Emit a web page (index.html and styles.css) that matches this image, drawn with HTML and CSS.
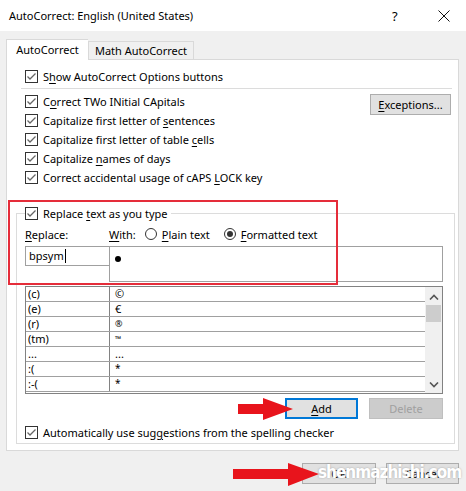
FILE: index.html
```html
<!DOCTYPE html>
<html>
<head>
<meta charset="utf-8">
<title>AutoCorrect</title>
<link rel="stylesheet" href="styles.css">
</head>
<body>

<div class="window">
	<div class="titlebar">
		<span class="title">AutoCorrect: English (United States)</span>
		<span class="help">?</span>
		<span class="close">
			<svg width="12" height="12" viewBox="0 0 12 12"><path d="M0.5 0.5 L11.5 11.5 M11.5 0.5 L0.5 11.5" stroke="#111" stroke-width="1"/></svg>
		</span>
	</div>

	<div class="body">
		<div class="tabs">
			<div class="tab active">AutoCorrect</div>
			<div class="tab">Math AutoCorrect</div>
		</div>

		<div class="panel">
			<div class="check first"><span class="box"></span><span>S<u>h</u>ow AutoCorrect Options buttons</span></div>
			<div class="sep"></div>

			<div class="options">
				<div class="checks">
					<div class="check"><span class="box"></span><span>C<u>o</u>rrect TWo INitial CApitals</span></div>
					<div class="check"><span class="box"></span><span>Capitalize first letter of <u>s</u>entences</span></div>
					<div class="check"><span class="box"></span><span>Capitalize first letter of table <u>c</u>ells</span></div>
					<div class="check"><span class="box"></span><span>Capitalize <u>n</u>ames of days</span></div>
					<div class="check"><span class="box"></span><span>Correct accidental usage of cAPS <u>L</u>OCK key</span></div>
				</div>
				<div class="btn exceptions"><u>E</u>xceptions...</div>
			</div>

			<fieldset class="group">
				<legend class="check"><span class="box"></span><span>Replace <u>t</u>ext as you type</span></legend>

				<div class="labels">
					<span class="lbl-replace"><u>R</u>eplace:</span>
					<span class="lbl-with"><u>W</u>ith:</span>
					<span class="radio"></span><span class="radio-text"><u>P</u>lain text</span>
					<span class="radio on"></span><span class="radio-text"><u>F</u>ormatted text</span>
				</div>

				<div class="inputs">
					<div class="replace-input">bpsym<span class="caret"></span></div>
					<div class="with-input"><span class="bullet"></span></div>
				</div>

				<div class="list">
					<table class="entries">
						<tr><td>(c)</td><td>©</td></tr>
						<tr><td>(e)</td><td>€</td></tr>
						<tr><td>(r)</td><td class="small">®</td></tr>
						<tr><td>(tm)</td><td class="tiny">™</td></tr>
						<tr><td>...</td><td>...</td></tr>
						<tr><td>:(</td><td class="star">*</td></tr>
						<tr><td>:-(</td><td class="star">*</td></tr>
					</table>
					<div class="scrollbar">
						<svg class="arrow-up" width="10" height="6" viewBox="0 0 10 6"><path d="M1 5.5 L5 1.5 L9 5.5" fill="none" stroke="#555" stroke-width="1.6"/></svg>
						<div class="thumb"></div>
						<svg class="arrow-down" width="10" height="6" viewBox="0 0 10 6"><path d="M1 0.5 L5 4.5 L9 0.5" fill="none" stroke="#555" stroke-width="1.6"/></svg>
					</div>
				</div>

				<div class="list-buttons">
					<div class="btn default"><u>A</u>dd</div>
					<div class="btn disabled">Delete</div>
				</div>

				<div class="check last"><span class="box"></span><span>Automatically use sug<u>g</u>estions from the spelling checker</span></div>
			</fieldset>
		</div>

		<div class="footer">
			<div class="btn">OK</div>
			<div class="btn">Cancel</div>
		</div>
	</div>

	<!-- red markup drawn over the dialog -->
	<div class="highlight"></div>
	<svg class="pointer pointer-add" width="56" height="24" viewBox="0 0 56 24"><polygon points="0,6 25,6 25,0 55,11 25,22 25,16 0,16" fill="#e8141c"/></svg>
	<svg class="pointer pointer-ok" width="88" height="24" viewBox="0 0 88 24"><polygon points="0,6 55,6 55,0 86,11 55,23 55,16 0,16" fill="#e8141c"/></svg>
	<div class="watermark">shenmazhishi.com</div>
</div>

</body>
</html>
```

FILE: styles.css
```css
body {
	margin: 0;
	padding: 0;
	background: #f0f0f0;
}
u {
	text-decoration-thickness: 1px;
	text-underline-offset: 2px;
}
.window {
	position: relative;
	width: 466px;
	height: 491px;
	overflow: hidden;
	background: #f0f0f0;
	font-family: "Noto Sans", "Open Sans", sans-serif;
	font-size: 11px;
	color: #000;
}

/* title bar */
.titlebar {
	height: 31px;
	background: #fff;
	display: flex;
	align-items: center;
	padding-left: 9px;
}
.title {
	flex: 1;
	font-size: 11px;
}
.help {
	width: 12px;
	margin-right: 34px;
	font-size: 13px;
}
.close {
	width: 12px;
	height: 12px;
	margin-right: 16px;
	display: flex;
}

.body {
	padding: 8px 7px 0 6px;
}

/* tabs */
.tabs {
	display: flex;
	height: 20px;
	align-items: flex-end;
}
.tab {
	height: 18px;
	border: 1px solid #d9d9d9;
	border-bottom: none;
	line-height: 17px;
	box-sizing: border-box;
	background: #f0f0f0;
	width: 106px;
	text-align: center;
	white-space: nowrap;
}
.tab.active {
	position: relative;
	z-index: 1;
	height: 21px;
	width: 82px;
	margin-bottom: -1px;
	background: #fff;
	border-right: none;
	line-height: 20px;
}

.panel {
	height: 392px;
	box-sizing: border-box;
	background: #fff;
	border: 1px solid #d9d9d9;
	padding-top: 7px;
}

/* checkboxes */
.check {
	display: flex;
	align-items: center;
	height: 19px;
	padding-left: 18px;
	white-space: nowrap;
}
.box {
	width: 13px;
	height: 13px;
	box-sizing: border-box;
	border: 1px solid #333;
	margin-right: 5px;
	flex: none;
	background: #fff url("data:image/svg+xml,%3Csvg xmlns='http://www.w3.org/2000/svg' width='11' height='11'%3E%3Cpath d='M1.5 5.5 L4 8 L9.5 2.5' fill='none' stroke='%23666' stroke-width='1.3'/%3E%3C/svg%3E") no-repeat center;
}
.sep {
	height: 1px;
	background: #dcdcdc;
	margin: 2px 6px 3px 14px;
}

.options {
	display: flex;
	align-items: flex-start;
}
.checks {
	flex: 1;
}
.btn {
	height: 21px;
	box-sizing: border-box;
	border: 1px solid #adadad;
	background: #e1e1e1;
	text-align: center;
	line-height: 19px;
}
.exceptions {
	width: 81px;
	margin: 2px 7px 0 0;
}

/* replace group */
.group {
	margin: 18px 3px 0 9px;
	padding: 0 11px 3px 8px;
	border: 1px solid #dcdcdc;
	min-inline-size: 0;
}
.group legend {
	height: 16px;
	padding: 0 3px 0 0;
	margin-left: 0;
}
.labels {
	display: flex;
	align-items: center;
	height: 16px;
	margin-top: 5px;
}
.lbl-replace {
	width: 84px;
}
.lbl-with {
	margin-right: 9px;
}
.radio {
	width: 12px;
	height: 12px;
	box-sizing: border-box;
	border: 1px solid #333;
	border-radius: 50%;
	margin-right: 5px;
	position: relative;
}
.radio.on::after {
	content: "";
	position: absolute;
	left: 2px;
	top: 2px;
	width: 6px;
	height: 6px;
	border-radius: 50%;
	background: #333;
}
.radio-text {
	margin-right: 14px;
}

.inputs {
	display: flex;
	align-items: flex-start;
	margin-top: 4px;
}
.replace-input {
	width: 84px;
	height: 20px;
	box-sizing: border-box;
	border: 1px solid #a0a0a0;
	border-right: none;
	padding-left: 3px;
	line-height: 18px;
	display: flex;
	align-items: center;
}
.caret {
	width: 1px;
	height: 14px;
	background: #000;
	margin-left: 1px;
}
.with-input {
	flex: 1;
	height: 36px;
	box-sizing: border-box;
	border: 1px solid #a0a0a0;
	position: relative;
}
.bullet {
	position: absolute;
	left: 5px;
	top: 9px;
	width: 6px;
	height: 6px;
	border-radius: 50%;
	background: #000;
}

/* entry list */
.list {
	display: flex;
	height: 108px;
	box-sizing: border-box;
	border: 1px solid #828282;
	margin-top: 4px;
	overflow: hidden;
}
.entries {
	flex: 1;
	border-collapse: collapse;
	align-self: flex-start;
}
.entries td {
	height: 14px;
	padding: 0 0 0 2px;
	border-bottom: 1px solid #a0a0a0;
	line-height: 14px;
	white-space: nowrap;
}
.entries td:first-child {
	width: 81px;
	border-right: 1px solid #828282;
}
.entries td + td {
	padding-left: 5px;
}
.entries .small {
	font-size: 9px;
}
.entries .tiny {
	font-size: 8px;
	vertical-align: top;
}
.entries .star {
	vertical-align: top;
	line-height: 12px;
	font-size: 10px;
}
.scrollbar {
	width: 17px;
	background: #f0f0f0;
	display: flex;
	flex-direction: column;
	align-items: center;
}
.arrow-up {
	margin-top: 7px;
}
.thumb {
	width: 15px;
	height: 17px;
	background: #cdcdcd;
	margin-top: 5px;
}
.arrow-down {
	margin-top: auto;
	margin-bottom: 5px;
}

.list-buttons {
	display: flex;
	justify-content: flex-end;
	gap: 11px;
	margin-top: 4px;
}
.default {
	width: 73px;
	border: 2px solid #0078d7;
	line-height: 17px;
}
.disabled {
	width: 74px;
	color: #a0a0a0;
	background: #cccccc;
	border-color: #bfbfbf;
}
.check.last {
	padding-left: 0;
	height: 16px;
	margin-top: 5px;
}

.footer {
	display: flex;
	justify-content: flex-end;
	gap: 10px;
	margin-top: 12px;
}
.footer .btn {
	width: 74px;
}
.footer .btn + .btn {
	width: 73px;
}

/* markup layer */
.highlight {
	position: absolute;
	left: 8px;
	top: 200px;
	width: 330px;
	height: 85px;
	box-sizing: border-box;
	border: 2px solid #e52d3a;
}
.pointer {
	position: absolute;
}
.pointer-add {
	left: 238px;
	top: 398px;
}
.pointer-ok {
	left: 233px;
	top: 463px;
}
.watermark {
	position: absolute;
	left: 318px;
	top: 462px;
	font-family: "DejaVu Sans", sans-serif;
	font-stretch: condensed;
	font-weight: bold;
	font-size: 17px;
	letter-spacing: -1px;
	color: #fff;
	text-shadow: 0 0 2px rgba(120, 120, 120, 0.6);
}
```
